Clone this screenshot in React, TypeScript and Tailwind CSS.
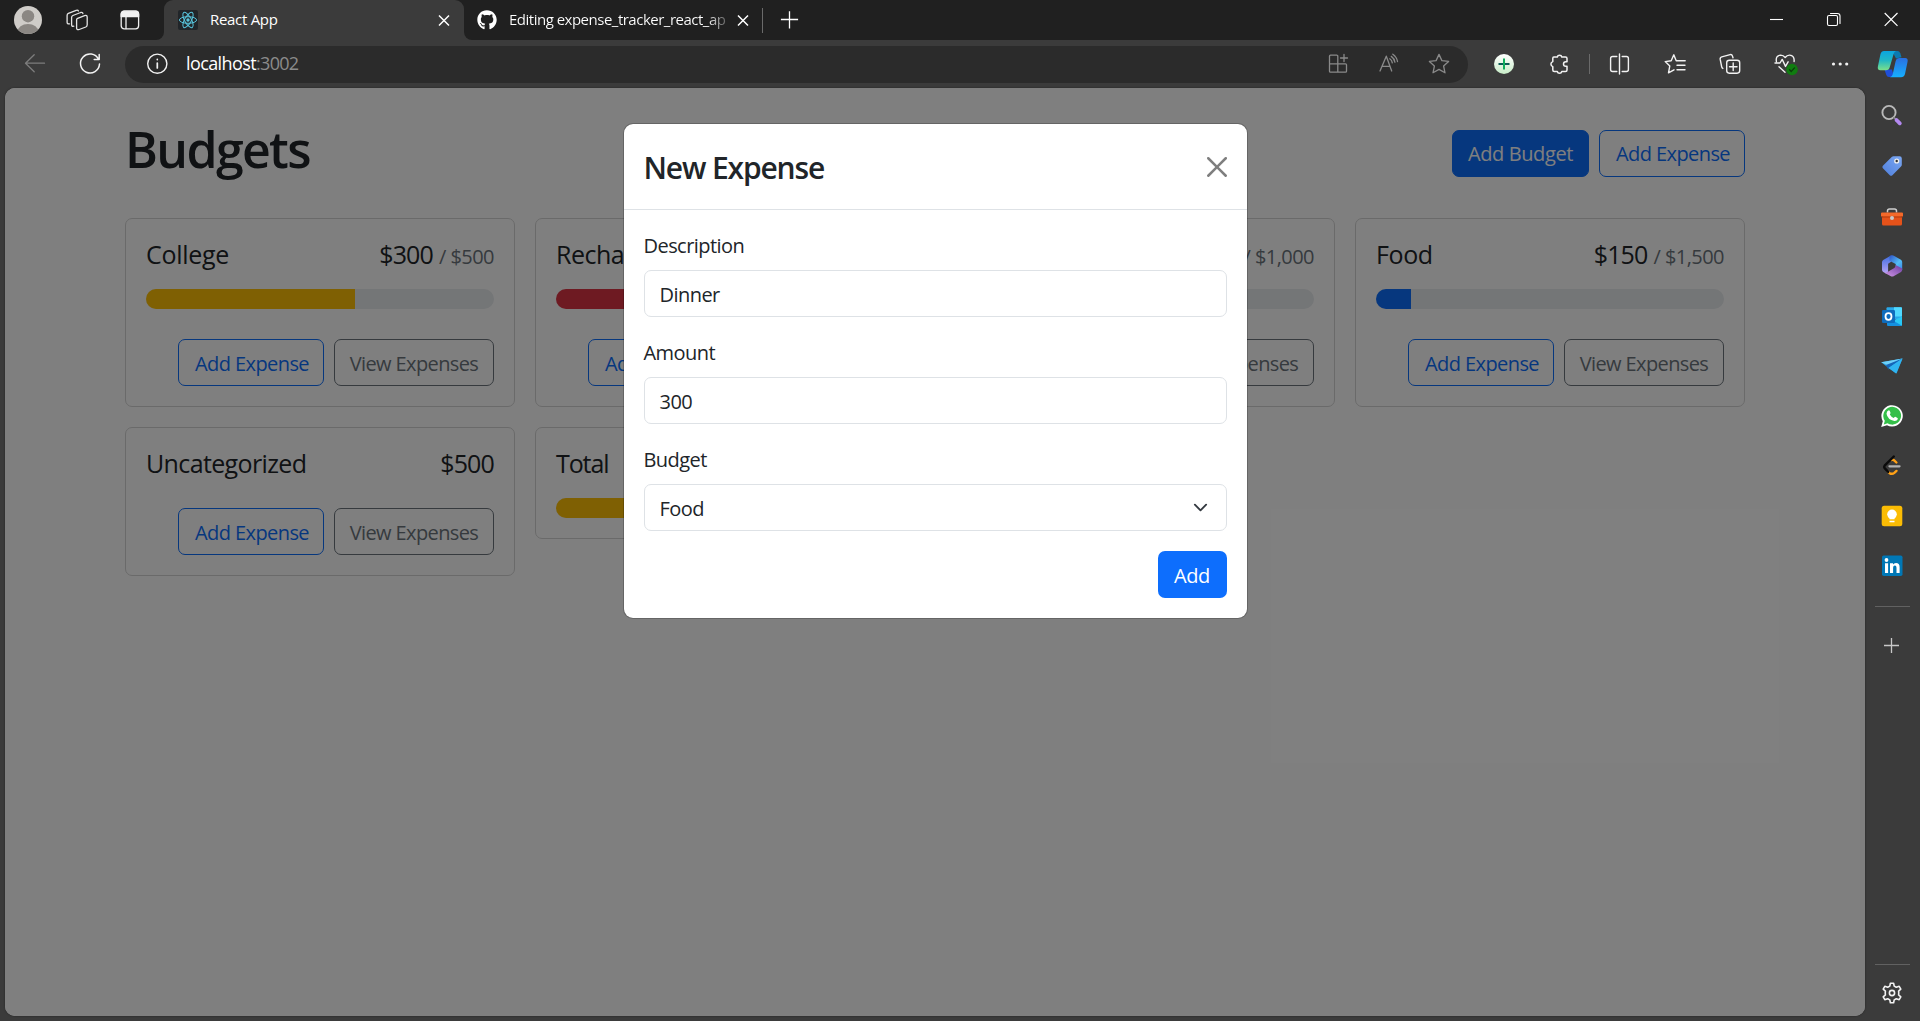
import type { ReactNode } from "react";
import { FaGithub } from "react-icons/fa";

/* ---------- helpers ---------- */

type IconProps = { children: ReactNode; className?: string; w?: string };

function Icon({ children, className = "", w = "1.3" }: IconProps) {
  return (
    <svg
      viewBox="0 0 24 24"
      width="24"
      height="24"
      fill="none"
      stroke="currentColor"
      strokeWidth={w}
      strokeLinecap="round"
      strokeLinejoin="round"
      className={"shrink-0 " + className}
    >
      {children}
    </svg>
  );
}

const STAR = "M12 2.4l2.9 6.2 6.7.8-5 4.6 1.4 6.8-6-3.4-6 3.4 1.4-6.8-5-4.6 6.7-.8z";

/* ---------- tab strip ---------- */

function TabStrip() {
  return (
    <div className="flex h-10 shrink-0 items-center bg-[#202020] text-[15px] text-white">
      <svg viewBox="0 0 28 28" width="28" height="28" className="ml-3.5 shrink-0">
        <clipPath id="avatar">
          <circle cx="14" cy="14" r="14" />
        </clipPath>
        <g clipPath="url(#avatar)">
          <rect width="28" height="28" fill="#cfccc8" />
          <circle cx="14" cy="10.2" r="6.2" fill="#8b8783" />
          <ellipse cx="14" cy="26" rx="10.5" ry="8" fill="#8b8783" />
        </g>
      </svg>
      <Icon className="ml-[23px] text-[#e4e4e4]" w="1.3">
        <path d="M12.6 10.400l7-2.800q2.600-.8 2.600 1.600v7.600q0 1.600-1.400 2.200l-6.600 2.500q-2.600.8-2.600-1.400v-8.300q0-1 1-1.400z" />
        <path d="M8.800 18.200q-2.200.600-2.200-1.500V9.600q0-1.500 1.300-2.100l7.800-3q1.800-.500 2.200 1" />
        <path d="M4.500 15.800q-2.400.400-2.400-1.500V7.400q0-1.500 1.300-2.100l7.800-3q1.800-.500 2.200 .700" />
      </Icon>
      <Icon className="ml-[29px] text-[#f0f0f0]" w="1.3">
        <rect x="3.200" y="3.200" width="17.400" height="17.600" rx="3" />
        <path d="M3.200 8.500V6.200a3 3 0 0 1 3-3h11.400a3 3 0 0 1 3 3v2.300z" fill="currentColor" />
        <path d="M8 8.500v12" />
      </Icon>

      {/* active tab with its flared lower corners */}
      <div className="ml-[14px] flex h-10 w-[8px] shrink-0 items-end bg-[#3b3b3b]">
        <div className="h-10 w-[8px] rounded-br-[9px] bg-[#202020]" />
      </div>
      <div className="flex h-10 w-[300px] shrink-0 items-center rounded-t-[9px] bg-[#3b3b3b] pl-[14px] pr-3">
        <svg viewBox="0 0 20 20" width="20" height="20" className="shrink-0">
          <rect width="20" height="20" rx="2" fill="#212529" />
          <g fill="none" stroke="#58c4dc" strokeWidth="1">
            <ellipse cx="10" cy="10" rx="8.600" ry="3.300" />
            <ellipse cx="10" cy="10" rx="8.600" ry="3.300" transform="rotate(60 10 10)" />
            <ellipse cx="10" cy="10" rx="8.600" ry="3.300" transform="rotate(120 10 10)" />
          </g>
          <circle cx="10" cy="10" r="1.700" fill="#58c4dc" />
        </svg>
        <span className="ml-3 flex-1 pb-0.5 tracking-[-0.3px]">React App</span>
        <Icon className="-mr-1" w="1.5">
          <path d="M7 7.500l10 10m0-10l-10 10" strokeLinecap="butt" />
        </Icon>
      </div>
      <div className="flex h-10 w-[8px] shrink-0 bg-[#3b3b3b]">
        <div className="h-10 w-[8px] rounded-bl-[9px] bg-[#202020]" />
      </div>

      <FaGithub className="ml-[5px] size-5 shrink-0" />
      <span className="ml-3 w-[220px] overflow-hidden whitespace-nowrap bg-gradient-to-r from-white from-90% to-[#4a4a4a] bg-clip-text pb-0.5 tracking-[-0.5px] text-transparent">
        Editing expense_tracker_react_ap
      </span>
      <Icon className="ml-[2px]" w="1.500">
        <path d="M7 7.500l10 10m0-10l-10 10" strokeLinecap="butt" />
      </Icon>
      <div className="ml-[7px] h-[25px] w-px bg-[#6a6a6a]" />
      <Icon className="ml-[14px]" w="1.300">
        <path d="M12.500 3.200v17.200M3.900 11.500h17.200" strokeLinecap="butt" />
      </Icon>

      <div className="flex-1" />
      <Icon w="1.100">
        <path d="M5 11.500h13" strokeLinecap="butt" />
      </Icon>
      <Icon className="ml-[33px]" w="1.100">
        <rect x="5.500" y="7.500" width="10" height="10" rx="1.500" />
        <path d="M8.500 5.500h7a2.500 2.500 0 0 1 2.500 2.500v7.500" />
      </Icon>
      <Icon className="ml-[33px] mr-[17px]" w="1.200">
        <path d="M5.700 5l12.800 12.800M18.500 5L5.700 17.800" strokeLinecap="butt" />
      </Icon>
    </div>
  );
}

/* ---------- toolbar ---------- */

function Toolbar() {
  return (
    <div className="flex h-12 shrink-0 items-center bg-[#3b3b3b] text-[#f2f2f2]">
      <Icon className="ml-[23px] text-[#7d7d7d]">
        <path d="M21.500 11.200H2.500m8.700-8.500l-8.700 8.500 8.700 8.500" />
      </Icon>
      <Icon className="ml-[31px]" w="1.500">
        <path d="M20.500 7.200A9.500 9.500 0 1 0 21.500 12M21.200 2.500v5h-5" />
      </Icon>
      <div className="ml-[23px] flex h-[37px] w-[1343px] shrink-0 items-center rounded-full bg-[#2b2b2b] pr-[17px]">
        <Icon className="ml-5" w="1.400">
          <circle cx="12.300" cy="11.700" r="9.600" />
          <path d="M12.300 11v5M12.300 7.400v.2" strokeWidth="1.700" />
        </Icon>
        <span className="ml-[17px] pb-0.5 text-[18px] leading-none tracking-[-0.600px] text-white">
          localhost<span className="tracking-[-0.700px] text-[#8b8b8b]">:3002</span>
        </span>
        <div className="flex flex-1 items-center justify-end gap-[26px] text-[#8a8a8a]">
          <Icon>
            <path d="M3.500 3.200h6.300a1 1 0 0 1 1 1v7.600H2.500V4.200a1 1 0 0 1 1-1zM2.500 11.800h8.300v8.400H3.500a1 1 0 0 1-1-1zM10.800 11.800h7.700a1 1 0 0 1 1 1v6.400a1 1 0 0 1-1 1h-7.700zM17 2.500v7M13.500 6h7" />
          </Icon>
          <Icon>
            <path d="M3 19L9.300 4.200 14.700 19M5 14.300h8M12.800 6.800q2.200 1.500 2.500 4M14.300 4.400q3.200 2.300 3.600 5.800M15.800 2.200q4 2.800 4.700 7.300" />
          </Icon>
          <Icon>
            <path d={STAR} />
          </Icon>
        </div>
      </div>
      <svg viewBox="0 0 24 24" width="24" height="24" className="ml-6 shrink-0">
        <defs>
          <linearGradient id="mint" x1="0" y1="0" x2="0" y2="1">
            <stop offset="0" stopColor="#ffffff" />
            <stop offset="1" stopColor="#c8ecc8" />
          </linearGradient>
        </defs>
        <circle cx="12" cy="12" r="10" fill="url(#mint)" />
        <path d="M6.500 12h11" stroke="#0b5a55" strokeWidth="2" />
        <path d="M12 6.500v11" stroke="#0fae5c" strokeWidth="2" />
      </svg>
      <Icon className="ml-[31px]" w="1.500">
        <path d="M6.800 5h3.500a2.300 2.300 0 0 1 4.500 0h3.700a1.500 1.500 0 0 1 1.500 1.500v3.200h-1.200a2.300 2.300 0 0 0 0 4.600H20v3.700a1.500 1.500 0 0 1-1.500 1.500h-3.700a2.300 2.300 0 0 1-4.500 0H7.300a1.500 1.500 0 0 1-1.500-1.500v-3.400a2.600 2.600 0 0 1 0-5V6.200q0-1.200 1-1.200z" />
      </Icon>
      <div className="ml-[18px] h-5 w-px bg-[#6a6a6a]" />
      <Icon className="ml-[18px]" w="1.400">
        <path d="M8.800 4.500H4.600a2 2 0 0 0-2 2v11a2 2 0 0 0 2 2h4.200M14.200 4.500h4.200a2 2 0 0 1 2 2v11a2 2 0 0 1-2 2h-4.200M11.500 2v20" />
      </Icon>
      <Icon className="ml-[31px]" w="1.400">
        <path d="M13.200 8.800L10.800 2.800 8.200 8.800l-6 .8 4.600 4.300-1.300 7 5.500-3.100M13.200 8.800h9M14 13.200h8M14 17.700h8" />
      </Icon>
      <Icon className="ml-[31px]" w="1.400">
        <path d="M4.800 16.400q-.9-.4-1.100-1.500L2.200 7.400q-.3-2 1.600-2.500l8.300-2.300q1.800-.4 2.300 1.300l.6 1.900" />
        <rect x="8.700" y="8.200" width="13" height="13" rx="2.600" />
        <path d="M15.200 11v7.500M11.500 14.700h7.500" />
      </Icon>
      <Icon className="ml-[32px] overflow-visible" w="1.400">
        <path d="M2.400 9.500q-1-5.900 4.300-6.400 2.700 0 4.500 2.400 1.800-2.500 4.500-2.400 5 .6 4.400 6.400M5 14.800l6 5.500M1 11h5l2.200-3.600 3.300 7 2.600-4.600" />
        <circle cx="18" cy="17.500" r="5.800" fill="#107c10" stroke="none" />
        <path d="M15.600 17.800l1.700 1.600 3.200-3.500" stroke="#0a3d0a" />
      </Icon>
      <Icon className="ml-[30px]">
        <g fill="currentColor" stroke="none">
          <circle cx="5.500" cy="12" r="1.600" />
          <circle cx="12.200" cy="12" r="1.600" />
          <circle cx="18.700" cy="12" r="1.600" />
        </g>
      </Icon>
      <svg viewBox="0 0 32 32" width="32" height="32" className="ml-[25px] shrink-0">
        <defs>
          <linearGradient id="cpl" x1="0" y1="0" x2="0" y2="1">
            <stop offset="0" stopColor="#0ba5e0" />
            <stop offset=".5" stopColor="#22b8c4" />
            <stop offset="1" stopColor="#7be08a" />
          </linearGradient>
          <linearGradient id="cpr" x1="0" y1="0" x2="0" y2="1">
            <stop offset="0" stopColor="#2a6fe0" />
            <stop offset="1" stopColor="#16b0ff" />
          </linearGradient>
        </defs>
        <path d="M15 3h5.500q2 0 2.800 2.200l1.200 4-5.500 1.300z" fill="#0b7ab0" />
        <path d="M7.500 21.500h7.500l2 7.500h-5q-2 0-2.700-2z" fill="#1f4fd8" />
        <path d="M7 3H19q-1.700.6-2.300 2.800L12.800 19q-.8 3.200-3.800 3.200H3.400q-3.300 0-2.500-3.700L3.500 6Q4.400 3 7 3z" fill="url(#cpl)" />
        <path d="M22.500 10h5.700q3 0 2.400 3.500L28 26q-1 3.200-4 3.200H13q2.200-.5 2.700-3l2.900-13q.9-3.200 3.900-3.200z" fill="url(#cpr)" />
      </svg>
    </div>
  );
}

/* ---------- sidebar ---------- */

function Slot({ children }: { children: ReactNode }) {
  return <div className="flex h-[50px] w-[55px] items-center justify-center">{children}</div>;
}

function Art({ children }: { children: ReactNode }) {
  return (
    <svg viewBox="0 0 24 24" width="24" height="24">
      {children}
    </svg>
  );
}

function Sidebar() {
  return (
    <div className="flex w-[55px] shrink-0 flex-col items-center bg-[#3b3b3b] pr-px pt-[3px]">
      <Slot>
        <Art>
          <circle cx="9" cy="8.500" r="6.600" fill="none" stroke="#b9b9b9" strokeWidth="1.900" />
          <path d="M13.500 13l2.500 2.500" stroke="#888" strokeWidth="1.600" />
          <path d="M16.500 16l3.300 3.300" stroke="#b388f0" strokeWidth="3.800" strokeLinecap="round" />
        </Art>
      </Slot>
      <Slot>
        <Art>
          <defs>
            <linearGradient id="tag" x1="1" y1="0" x2="0" y2="1">
              <stop offset="0" stopColor="#7ba7f2" />
              <stop offset="1" stopColor="#4f7fdc" />
            </linearGradient>
          </defs>
          <path d="M13.500 2.200h6q2.300 0 2.300 2.300v6.300q0 1-.8 1.800l-8.600 8.600q-1.300 1.200-2.600 0l-6.900-6.900q-1.200-1.200 0-2.500L11.700 3q.8-.8 1.800-.8z" fill="url(#tag)" />
          <circle cx="16.700" cy="7" r="1.900" fill="#333" stroke="#eee" strokeWidth="1.400" />
        </Art>
      </Slot>
      <Slot>
        <Art>
          <path d="M7.500 8.500V7q0-2 2-2h5q2 0 2 2v1.500" fill="none" stroke="#cfcfcf" strokeWidth="1.500" />
          <rect x="2" y="12" width="20" height="9.500" rx="1.500" fill="#e5521a" />
          <path d="M2 8.500h20a1 1 0 0 1 1 1v3H1v-3a1 1 0 0 1 1-1z" fill="#f4692a" />
          <path d="M1.500 13h21" stroke="#b23a0c" strokeWidth="1" />
          <circle cx="12" cy="14" r="2" fill="#c9c9c9" />
        </Art>
      </Slot>
      <Slot>
        <Art>
          <defs>
            <linearGradient id="mA" x1="0" y1="0" x2="0" y2="1">
              <stop offset="0" stopColor="#3d6ce0" />
              <stop offset="1" stopColor="#b9a5f5" />
            </linearGradient>
            <linearGradient id="mB" x1="0" y1="0" x2="1" y2="1">
              <stop offset="0" stopColor="#2f54c8" />
              <stop offset=".6" stopColor="#53bdf5" />
              <stop offset="1" stopColor="#3a86e8" />
            </linearGradient>
            <linearGradient id="mC" x1="0" y1="1" x2="1" y2="0">
              <stop offset="0" stopColor="#d49ae8" />
              <stop offset="1" stopColor="#6a3aa0" />
            </linearGradient>
          </defs>
          <path d="M11.500 1.300L3.200 6q-1.200.8-1.200 2.200v7.600q0 1.500 1.200 2.200l3.300 1.700 1.600-2.200V9.800l3-2z" fill="url(#mA)" />
          <path d="M9.500 2.300q2.400-1.800 4.800-.400l6.600 3.800q1.300.8 1.300 2.300v8l-6.500-1.600V10L9.500 6.800z" fill="url(#mB)" />
          <path d="M22.200 14.500v1.300q0 1.400-1.200 2.200l-7 4q-1.800 1-3.600 0L4 18.500q2.500.5 4.300-.900l6-3.500q1.400-1.100 1.400-3z" fill="url(#mC)" />
        </Art>
      </Slot>
      <Slot>
        <Art>
          <rect x="6.500" y="3.200" width="15.500" height="12" rx="1" fill="#28a8ea" />
          <path d="M14 3.200h7a1 1 0 0 1 1 1V12.500h-8z" fill="#50d9ff" />
          <path d="M7 12.500l8 4 7-4v8.500a1 1 0 0 1-1 1H8a1 1 0 0 1-1-1z" fill="#1490df" />
          <path d="M22 12.500v9.300L13 16.500z" fill="#28c8f5" />
          <rect x="2" y="6" width="13" height="13" rx="1.300" fill="#0f6cbd" />
          <ellipse cx="8.500" cy="12.500" rx="3" ry="3.300" fill="none" stroke="#fff" strokeWidth="1.800" />
        </Art>
      </Slot>
      <Slot>
        <Art>
          <path d="M1.200 8.200L22.500 4.600 16 19.500z" fill="#29a9ea" />
          <path d="M1.200 8.200L22.500 4.600 9.500 12z" fill="#6fd0f8" />
          <path d="M6 11L22.500 4.600 8.500 14v2z" fill="#1565b8" />
          <path d="M8.500 14L22.500 4.600 16.500 19.500z" fill="#30b4f0" />
        </Art>
      </Slot>
      <Slot>
        <Art>
          <path d="M1.200 23l1.600-5.800A10.700 10.700 0 1 1 7 21.300z" fill="#fff" />
          <path d="M3.800 20.400l1-3.700A8.900 8.900 0 1 1 7.500 19.300z" fill="#34bf49" />
          <path d="M8.800 6.300q.7 0 1 .8l.7 1.700q.2.500-.7 1.700 1.500 2.700 4 3.600 1.100-1.400 1.500-1.300l2.200 1.100q.5.300.2 1.300-.8 2-3.300 1.800-6.900-1.400-7.900-7.300.100-2.700 2.300-3.400z" fill="#fff" />
        </Art>
      </Slot>
      <Slot>
        <Art>
          <path d="M11.500 6q1.500-.8 2.700.4l2.200 2.100M8 17.700l1.300 1.200q2.700 1.900 5 0l2.200-2" fill="none" stroke="#ffa116" strokeWidth="2.400" strokeLinecap="round" />
          <path d="M13.800 2.500L4.600 11.700q-1 1.300 0 2.500l3.600 3.700" fill="none" stroke="#0a0a0a" strokeWidth="2.400" strokeLinecap="round" strokeLinejoin="round" />
          <path d="M9.500 12.300h10" stroke="#b3b3b3" strokeWidth="2.300" strokeLinecap="round" />
        </Art>
      </Slot>
      <Slot>
        <Art>
          <rect x="1.700" y="1.700" width="20.600" height="20.600" rx="2.500" fill="#fbbc04" />
          <circle cx="12" cy="10.300" r="4.800" fill="#fff" />
          <path d="M9.500 12h5v3.200h-5zM9.500 16.700h5v1.500h-5z" fill="#fff" />
        </Art>
      </Slot>
      <Slot>
        <Art>
          <rect x="2" y="1.500" width="20.500" height="20.500" rx="1.800" fill="#0077b5" />
          <circle cx="6.500" cy="6" r="1.900" fill="#fff" />
          <path d="M5 9.200h3.100v9.800H5zM10 9.200h3v1.400q1-1.700 3-1.700 3.600 0 3.600 4.100v6h-3.100v-5.200q0-2.200-1.600-2.200-1.800 0-1.800 2.200v5.200H10z" fill="#fff" />
        </Art>
      </Slot>
      <div className="mt-[15px] h-px w-[35px] bg-[#616161]" />
      <Icon className="mt-[26px] text-[#c8c8c8]" w="1.300">
        <path d="M11.500 5v15M4 12.500h15" strokeLinecap="butt" />
      </Icon>
      <div className="flex-1" />
      <div className="h-px w-[35px] bg-[#616161]" />
      <Icon className="mb-4 mt-4 text-[#f2f2f2]" w="1.600">
        <path d="M9.800 5.100l.6-2.900h3.200l.6 2.900 2.100 1.200 2.900-1 1.600 2.800-2.200 2q.3 1.900 0 3.800l2.200 2-1.600 2.800-2.900-1-2.100 1.200-.6 2.900h-3.200l-.6-2.900-2.100-1.200-2.900 1-1.600-2.800 2.200-2q-.3-1.900 0-3.800l-2.200-2 1.600-2.800 2.900 1z" />
        <circle cx="12" cy="12" r="2.600" />
      </Icon>
    </div>
  );
}

/* ---------- budgets page ---------- */

const BTN = "flex h-[47px] items-center justify-center rounded-[7px] border pt-0.5 whitespace-nowrap";

function AddExpense() {
  return (
    <button className={BTN + " w-[146px] border-[#0d6efd] pl-0.5 tracking-[-0.580px] text-[#0d6efd]"}>
      Add Expense
    </button>
  );
}

type Budget = {
  name: string;
  spacing: string;
  amount: string;
  max?: string;
  percent?: number;
  tone?: string;
  actions?: boolean;
};

const budgets: Budget[] = [
  { name: "College", spacing: "tracking-[-0.300px]", amount: "$300", max: "$500", percent: 60, tone: "bg-[#ffc107]", actions: true },
  { name: "Recharge", spacing: "tracking-[-0.500px]", amount: "$499", max: "$500", percent: 99.8, tone: "bg-[#dc3545]", actions: true },
  { name: "Rent", spacing: "tracking-[-0.500px]", amount: "$600", max: "$1,000", percent: 60, tone: "bg-[#ffc107]", actions: true },
  { name: "Food", spacing: "tracking-[-0.400px]", amount: "$150", max: "$1,500", percent: 10, tone: "bg-[#0d6efd]", actions: true },
  { name: "Uncategorized", spacing: "tracking-[-0.630px]", amount: "$500", actions: true },
  { name: "Total", spacing: "tracking-[-1.100px]", amount: "$2,049", max: "$3,500", percent: 58.5, tone: "bg-[#ffc107]" },
];

function BudgetCard({ name, spacing, amount, max, percent, tone, actions }: Budget) {
  return (
    <div className="flex flex-col rounded-[7px] border border-[#d5d5d5] p-5">
      <div className="flex h-[30px] items-baseline justify-between text-[25px] leading-[31px]">
        <div className={spacing}>{name}</div>
        <div className="flex items-baseline tracking-[-0.850px]">
          {amount}
          {max && <span className="ml-[6px] text-[20px] tracking-[-0.550px] text-[#6c757d]">/ {max}</span>}
        </div>
      </div>
      {percent !== undefined && (
        <div className="mt-5 h-5 overflow-hidden rounded-full bg-[#e9ecef]">
          <div className={"h-5 " + tone} style={{ width: percent + "%" }} />
        </div>
      )}
      {actions && (
        <div className="mt-[30px] flex justify-end gap-2.5">
          <AddExpense />
          <button className={BTN + " w-[160px] border-[#6c757d] tracking-[-0.620px] text-[#6c757d]"}>View Expenses</button>
        </div>
      )}
    </div>
  );
}

function BudgetsPage() {
  return (
    <div className="mx-[120px] mt-[30px]">
      <div className="mb-[30px] flex h-[70px] items-center gap-2.5">
        <h1 className="mb-2 mr-auto text-[50px] font-semibold leading-[60px] tracking-[-1.650px]">Budgets</h1>
        <button className={BTN + " w-[137px] border-[#0d6efd] bg-[#0d6efd] tracking-[-0.400px] text-white"}>Add Budget</button>
        <AddExpense />
      </div>
      <div className="grid grid-cols-4 items-start gap-5">
        {budgets.map((b) => (
          <BudgetCard key={b.name} {...b} />
        ))}
      </div>
    </div>
  );
}

function Field({ label, value, select }: { label: string; value: string; select?: boolean }) {
  return (
    <div className="mb-5">
      <div className="mb-2.5 h-[30px] leading-[32px]">{label}</div>
      <div className="flex h-[47px] items-center justify-between rounded-[7px] border border-[#dee2e6] pl-[15px] pr-[18px] pt-0.5">
        {value}
        {select && (
          <svg viewBox="0 0 16 16" width="15" height="15" fill="none" stroke="#343a40" strokeWidth="2" strokeLinecap="round" strokeLinejoin="round" className="mb-0.5">
            <path d="M2 5l6 6 6-6" />
          </svg>
        )}
      </div>
    </div>
  );
}

function ExpenseModal() {
  return (
    <div className="flex w-[625px] flex-col rounded-[10px] border border-black/20 bg-white bg-clip-padding tracking-[-0.550px]">
      <div className="flex h-[86px] items-center justify-between border-b border-[#dee2e6] px-5">
        <div className="pt-0.5 text-[30px] font-semibold leading-[45px] tracking-[-1.150px]">New Expense</div>
        <svg viewBox="0 0 16 16" width="20" height="20" className="opacity-50">
          <path d="M.293.293a1 1 0 0 1 1.414 0L8 6.586 14.293.293a1 1 0 1 1 1.414 1.414L9.414 8l6.293 6.293a1 1 0 0 1-1.414 1.414L8 9.414l-6.293 6.293a1 1 0 0 1-1.414-1.414L6.586 8 .293 1.707a1 1 0 0 1 0-1.414z" />
        </svg>
      </div>
      <div className="flex flex-col p-5">
        <Field label="Description" value="Dinner" />
        <Field label="Amount" value="300" />
        <Field label="Budget" value="Food" select />
        <button className="flex h-[47px] w-[69px] items-center justify-center self-end rounded-[7px] bg-[#0d6efd] pt-0.5 tracking-[-0.400px] text-white">
          Add
        </button>
      </div>
    </div>
  );
}

export default function App() {
  return (
    <div className="flex h-[1021px] w-[1920px] flex-col overflow-hidden bg-[#3b3b3b] font-['Open_Sans',sans-serif]">
      <TabStrip />
      <Toolbar />
      <div className="flex min-h-0 flex-1">
        <div className="relative mb-[5px] ml-[5px] w-[1860px] shrink-0 overflow-hidden rounded-[10px] bg-white text-[20px] text-[#212529] shadow-[0_0_2px_rgba(0,0,0,0.5)]">
          <BudgetsPage />
          <div className="absolute inset-0 flex items-start justify-center bg-black/50 pt-[35px]">
            <ExpenseModal />
          </div>
        </div>
        <Sidebar />
      </div>
    </div>
  );
}
